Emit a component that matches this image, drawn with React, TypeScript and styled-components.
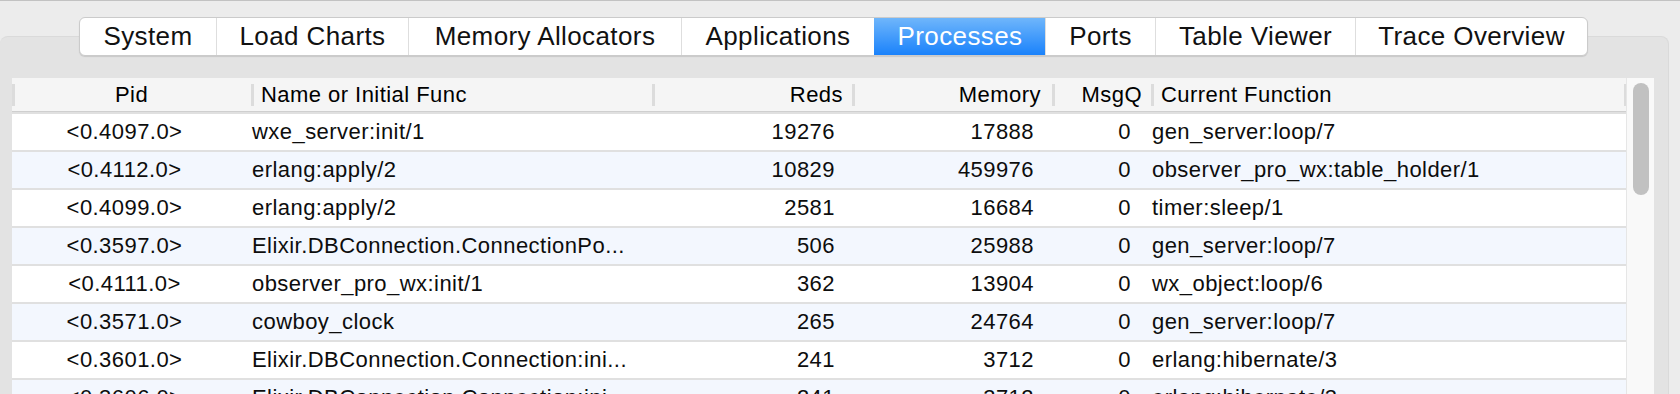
import styled, { createGlobalStyle, css } from 'styled-components';

type Proc = {
  pid: string;
  name: string;
  reds: number;
  memory: number;
  msgq: number;
  current: string;
};

const tabs = [
  { label: 'System', width: 136 },
  { label: 'Load Charts', width: 192 },
  { label: 'Memory Allocators', width: 273 },
  { label: 'Applications', width: 193 },
  { label: 'Processes', width: 171 },
  { label: 'Ports', width: 110 },
  { label: 'Table Viewer', width: 200 },
  { label: 'Trace Overview', width: 232 },
];

const processes: Proc[] = [
  { pid: '<0.4097.0>', name: 'wxe_server:init/1', reds: 19276, memory: 17888, msgq: 0, current: 'gen_server:loop/7' },
  { pid: '<0.4112.0>', name: 'erlang:apply/2', reds: 10829, memory: 459976, msgq: 0, current: 'observer_pro_wx:table_holder/1' },
  { pid: '<0.4099.0>', name: 'erlang:apply/2', reds: 2581, memory: 16684, msgq: 0, current: 'timer:sleep/1' },
  { pid: '<0.3597.0>', name: 'Elixir.DBConnection.ConnectionPo...', reds: 506, memory: 25988, msgq: 0, current: 'gen_server:loop/7' },
  { pid: '<0.4111.0>', name: 'observer_pro_wx:init/1', reds: 362, memory: 13904, msgq: 0, current: 'wx_object:loop/6' },
  { pid: '<0.3571.0>', name: 'cowboy_clock', reds: 265, memory: 24764, msgq: 0, current: 'gen_server:loop/7' },
  { pid: '<0.3601.0>', name: 'Elixir.DBConnection.Connection:ini...', reds: 241, memory: 3712, msgq: 0, current: 'erlang:hibernate/3' },
  { pid: '<0.3606.0>', name: 'Elixir.DBConnection.Connection:ini...', reds: 241, memory: 3712, msgq: 0, current: 'erlang:hibernate/3' },
];

const App = () => {
  return (
    <>
      <GlobalStyle />
      <Window>
        <TabBar>
          {tabs.map((tab, i) => (
            <Tab key={tab.label} $width={tab.width} $active={tab.label === 'Processes'} $first={i === 0}>
              {tab.label}
            </Tab>
          ))}
        </TabBar>
        <Panel>
          <ListArea>
            <List>
              <HeaderRow>
                <HeaderCell $align="center">Pid</HeaderCell>
                <HeaderCell $align="left">Name or Initial Func</HeaderCell>
                <HeaderCell $align="right" $pad={9}>Reds</HeaderCell>
                <HeaderCell $align="right" $pad={11}>Memory</HeaderCell>
                <HeaderCell $align="right" $pad={9}>MsgQ</HeaderCell>
                <HeaderCell $align="left">Current Function</HeaderCell>
                <HeaderCell $align="left" />
              </HeaderRow>
              {processes.map((p, i) => (
                <Row key={p.pid} $alt={i % 2 === 1}>
                  <PidCell>{p.pid}</PidCell>
                  <TextCell>{p.name}</TextCell>
                  <NumCell $pad={17}>{p.reds}</NumCell>
                  <NumCell $pad={18}>{p.memory}</NumCell>
                  <NumCell $pad={20}>{p.msgq}</NumCell>
                  <TextCell>{p.current}</TextCell>
                  <span />
                </Row>
              ))}
            </List>
            <ScrollTrack>
              <ScrollThumb />
            </ScrollTrack>
          </ListArea>
        </Panel>
      </Window>
    </>
  );
};

export default App;

const GlobalStyle = createGlobalStyle`
  html, body {
    margin: 0;
    padding: 0;
    background: #ececec;
  }
  body {
    font-family: "Liberation Sans", Arial, sans-serif;
    color: #000;
  }
`;

const columns = '239px 401px 200px 200px 99px 473px 1fr';

const Window = styled.div`
  width: 1680px;
  height: 394px;
  box-sizing: border-box;
  overflow: hidden;
  background: #ececec;
  border-top: 1px solid #c2c2c2;
  padding-top: 16px;
`;

const TabBar = styled.div`
  position: relative;
  z-index: 1;
  display: flex;
  width: fit-content;
  height: 39px;
  box-sizing: border-box;
  margin-left: 79px;
  background: #fff;
  border: 1px solid #cbcbcb;
  border-radius: 6px;
  overflow: hidden;
  box-shadow: 0 1px 1px rgba(0, 0, 0, 0.12);
`;

const Tab = styled.div<{ $width: number; $active: boolean; $first: boolean }>`
  width: ${({ $width }) => $width}px;
  box-sizing: border-box;
  display: flex;
  align-items: center;
  justify-content: center;
  font-size: 26px;
  letter-spacing: 0.4px;
  white-space: nowrap;
  color: #111;
  border-left: ${({ $first }) => ($first ? 'none' : '1px solid #dedede')};
  ${({ $active }) =>
    $active &&
    css`
      color: #fff;
      border-left-color: transparent;
      background: linear-gradient(#6fb6fb, #1a82fb);
    `}
`;

const Panel = styled.div`
  margin-top: -20px;
  margin-right: 11px;
  padding: 41px 14px 0 12px;
  height: 400px;
  background: #e3e3e3;
  border: 1px solid #dadada;
  border-left: none;
  border-radius: 0 8px 0 0;
  border-top-left-radius: 8px;
`;

const ListArea = styled.div`
  display: flex;
  height: 100%;
`;

const List = styled.div`
  flex: 1;
  background: #fff;
  overflow: hidden;
`;

const HeaderRow = styled.div`
  display: grid;
  grid-template-columns: ${columns};
  height: 33px;
  background: #f5f5f5;
  border-bottom: 1px solid #cfcfcf;
`;

const HeaderCell = styled.div<{ $align: 'left' | 'center' | 'right'; $pad?: number }>`
  display: flex;
  align-items: center;
  justify-content: ${({ $align }) => ($align === 'left' ? 'flex-start' : $align === 'center' ? 'center' : 'flex-end')};
  padding-left: ${({ $align }) => ($align === 'left' ? 10 : 0)}px;
  padding-right: ${({ $pad }) => $pad ?? 0}px;
  font-size: 22px;
  letter-spacing: 0.45px;
  white-space: nowrap;
  background: linear-gradient(#dcdcdc, #dcdcdc) left center / 3px 22px no-repeat;
`;

const Row = styled.div<{ $alt: boolean }>`
  display: grid;
  grid-template-columns: ${columns};
  height: 38px;
  box-sizing: border-box;
  border-top: 2px solid #e0e0e0;
  background: ${({ $alt }) => ($alt ? '#f3f7fe' : '#fff')};
  font-size: 22px;
  letter-spacing: 0.45px;
  color: #0d0d0d;
`;

const cellBase = css`
  display: flex;
  align-items: center;
  white-space: nowrap;
  overflow: hidden;
`;

const PidCell = styled.div`
  ${cellBase}
  justify-content: center;
  padding-right: 14px;
`;

const TextCell = styled.div`
  ${cellBase}
  padding-left: 1px;
`;

const NumCell = styled.div<{ $pad: number }>`
  ${cellBase}
  justify-content: flex-end;
  padding-right: ${({ $pad }) => $pad}px;
`;

const ScrollTrack = styled.div`
  width: 28px;
  box-sizing: border-box;
  background: #f9f9f9;
  border-left: 1px solid #e6e6e6;
  padding: 5px 5px 0 6px;
`;

const ScrollThumb = styled.div`
  width: 16px;
  height: 112px;
  border-radius: 8px;
  background: #c1c1c1;
`;
